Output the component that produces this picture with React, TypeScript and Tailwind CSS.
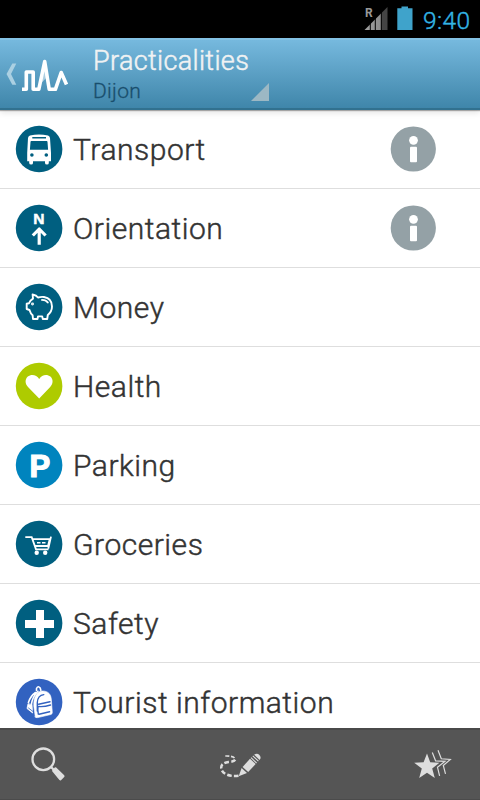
import type { ReactNode } from 'react'

type Item = {
  label: string
  color: string
  icon: ReactNode
  info?: boolean
}

const items: Item[] = [
  {
    label: 'Transport',
    color: '#005f80',
    info: true,
    icon: (
      <g fill="#fff">
        <path fillRule="evenodd" d="M15 10.5Q24 8.4 33 10.5Q34.8 11 35 13L36 28V36.2H33.8V38Q33.8 39.5 32 39.5Q30 39.5 30 38V36.2H18V38Q18 39.5 16.2 39.5Q14.2 39.5 14.2 38V36.2H12.2V28L13 13Q13.2 11 15 10.5ZM17.3 11.9V13.4H31V11.9ZM16.2 16Q15.6 16 15.5 17L14.9 24.7H33.1L32.5 17Q32.4 16 31.8 16Z" />
        <circle cx="16.9" cy="30" r="1.8" fill="#005f80" />
        <circle cx="31.3" cy="30" r="1.8" fill="#005f80" />
      </g>
    ),
  },
  {
    label: 'Orientation',
    color: '#005f80',
    info: true,
    icon: (
      <>
        <text x="23.9" y="20" textAnchor="middle" strokeWidth=".5" className="fill-white stroke-white font-['Liberation_Sans',sans-serif] text-[15.5px] font-bold">N</text>
        <path d="M24.2 40.8V25.5M17.8 31.5L24.2 25L30.6 31.5" fill="none" stroke="#fff" strokeWidth="3.2" strokeLinejoin="round" />
      </>
    ),
  },
  {
    label: 'Money',
    color: '#005f80',
    icon: (
      <g fill="none" stroke="#fff" strokeWidth="1.9" strokeLinejoin="round" strokeLinecap="round">
        <path d="M17.6 11.5Q21.5 12.2 23 14.5Q26 13.6 29 14C34 14.8 37 18.5 37 23.5C37 27.2 35.2 30 32.8 32L32.2 36H27.8L27.2 33.4H23L22.5 36H18L17.6 32.2Q15.5 30.5 14.5 27L11.7 26V20.8L14 20.3Q15 17.4 18 15.6Z" />
        <path d="M27 16.9Q31 17 32.8 19.5" />
        <circle cx="17.5" cy="21" r=".5" fill="#fff" />
      </g>
    ),
  },
  {
    label: 'Health',
    color: '#aecb00',
    icon: (
      <path d="M24.2 36.5L13 25C9.7 21.5 10 17 12.8 14.6C16.2 11.7 21.7 12.7 24.2 17C26.7 12.7 32 11.7 35.4 14.6C38.2 17 38.5 21.5 35.2 25Z" fill="#fff" />
    ),
  },
  {
    label: 'Parking',
    color: '#0084be',
    icon: (
      <text x="14.4" y="35.6" strokeWidth="1.2" className="fill-white stroke-white font-['Liberation_Sans',sans-serif] text-[31px] font-bold">P</text>
    ),
  },
  {
    label: 'Groceries',
    color: '#005f80',
    icon: (
      <>
        <path d="M10.3 17.2H16.7L21 29.3H33.5M17.5 19.1H34.8L33 26H20M36 16.6L33.3 28.5" fill="none" stroke="#fff" strokeWidth="1.8" />
        <path d="M22 22.7H25.5M27 22.7H30.5" stroke="#fff" strokeWidth="1.6" />
        <circle cx="21.7" cy="32.8" r="2.2" fill="#fff" />
        <circle cx="30.2" cy="32.8" r="2.2" fill="#fff" />
      </>
    ),
  },
  {
    label: 'Safety',
    color: '#005f80',
    icon: <path d="M21 11H29V21H39V29H29V39H21V29H10V21H21Z" fill="#fff" />,
  },
  {
    label: 'Tourist information',
    color: '#3262c0',
    icon: (
      <g fill="none" stroke="#fff" strokeLinejoin="round" strokeLinecap="round">
        <path d="M20.3 39L18.8 28C18.3 19 22 13 27.5 13C33.5 13 36 16.5 36.4 22L37.3 34.5Q37.4 36 35.9 36.5L22.8 39.6Q20.6 40 20.3 39Z" fill="#fff" strokeWidth=".6" />
        <path d="M22.3 33V24.5Q22.8 17.2 28.8 16.6M23.6 26.2L35 23.8M23.3 36Q22.5 32 23 28.5Q29 29.2 35.5 27M24 36.2L34.6 33.8" stroke="#3262c0" strokeWidth="1.4" />
        <path d="M21.5 12.5V10.5Q23 7.3 25.2 10L25.8 12.3M20.5 14.5Q15.5 18 13.4 24.5M23 13.3Q17.2 19 16.3 27" strokeWidth="1.6" />
        <path d="M13 26L12 30.5L17.6 35L17 27Z" fill="#fff" strokeWidth=".8" />
        <path d="M13.5 30L18 33.5" stroke="#3262c0" strokeWidth=".8" />
      </g>
    ),
  },
]

function InfoButton() {
  return (
    <button type="button" aria-label="Info" className="mr-[43px] ml-auto">
      <svg width="48" height="48" viewBox="0 0 48 48">
        <circle cx="24.3" cy="24" r="22.6" fill="#94a1a6" />
        <circle cx="24.5" cy="15.3" r="4.4" fill="#fff" />
        <rect x="21" y="21.8" width="7" height="15.4" rx="1" fill="#fff" />
      </svg>
    </button>
  )
}

function Row({ item }: { item: Item }) {
  return (
    <li className="flex h-[79px] shrink-0 items-center border-b border-[#dedede] pl-[15px]">
      <svg width="48" height="48" viewBox="0 0 48 48" className="shrink-0">
        <circle cx="24.1" cy="24" r="23.3" fill={item.color} />
        {item.icon}
      </svg>
      <span className="mt-0.5 ml-2.5 text-[30px] leading-[40px] font-light tracking-[0.52px] whitespace-nowrap text-[#333] [-webkit-text-stroke:0.45px_#333]">{item.label}</span>
      {item.info ? <InfoButton /> : null}
    </li>
  )
}

function StatusBar() {
  return (
    <div className="flex h-[38px] shrink-0 items-center justify-end bg-black">
      <svg width="60" height="38" viewBox="360 0 60 38">
        <defs>
          <linearGradient id="signal" x1="0" x2="1">
            <stop offset="0" stopColor="#a0a0a0" />
            <stop offset=".7" stopColor="#8c8c8c" />
            <stop offset=".72" stopColor="#444" />
            <stop offset="1" stopColor="#444" />
          </linearGradient>
        </defs>
        <path d="M364.5 30L387.5 7V30Z" fill="url(#signal)" />
        <path d="M370.3 10V30M375.3 10V30M381.3 10V30" stroke="#000" strokeWidth="1" />
        <path d="M365 17.5V8H373V17.5Z" fill="#000" />
        <text x="365" y="17" className="fill-[#999] font-[Roboto,sans-serif] text-[12px] font-bold">R</text>
        <path d="M397.3 8.3H401.5V6.5H408V8.3H412.5V30H397.3Z" fill="#3fa3cb" />
      </svg>
      <span className="mt-[3px] w-[60px] pl-[3px] text-[24.5px] leading-[38px] font-light tracking-[0.4px] text-[#33b5e5] [-webkit-text-stroke:0.4px_#33b5e5]">9:40</span>
    </div>
  )
}

function ActionBar() {
  return (
    <header className="relative z-10 flex h-[72px] shrink-0 border-t-2 border-b-2 border-t-[#83c2e4] border-b-[#31718f] bg-linear-to-b from-[#76b9de] to-[#3f86aa] shadow-[0_1px_1px_rgba(0,0,0,0.3),0_3px_6px_rgba(0,0,0,0.1)]">
      <svg width="93" height="68" viewBox="0 40 93 68" className="shrink-0">
        <path d="M12.3 63.5H16.3L11 74L16.3 84.7H12.3L6.5 74Z" fill="#abd0e2" />
        <path d="M22 89.3H26.3V72H33.2V89.3H38.8L44.7 61.5L49.2 89.3H55.4L61.2 72.5L66.5 84.5" fill="none" stroke="#fff" strokeWidth="3.6" strokeLinejoin="round" />
        <path d="M39.5 85L44.6 60L48 76Z" fill="#fff" opacity=".5" />
      </svg>
      <div className="flex flex-col">
        <h1 className="mt-[5px] text-[27px] leading-8 font-light tracking-[0.35px] text-[#f0f2f3] [-webkit-text-stroke:0.5px_#f0f2f3]">Practicalities</h1>
        <div className="flex">
          <span className="w-[158px] text-[21px] leading-[29px] font-light tracking-[0.3px] text-[#194e6c] [-webkit-text-stroke:0.3px_#194e6c]">Dijon</span>
          <svg width="19" height="19" viewBox="0 0 19 19" className="mt-1.5">
            <path d="M18 0V18H0Z" fill="#9cb8c4" />
          </svg>
        </div>
      </div>
    </header>
  )
}

function BottomBar() {
  return (
    <nav className="flex h-[72px] shrink-0 items-center justify-between border-t-2 border-b border-t-[#4a4a4a] border-b-[#4b4b4b] bg-[#555] px-6">
      <button type="button" aria-label="Search">
        <svg width="48" height="48" viewBox="24 741 48 48">
          <circle cx="43.3" cy="759.3" r="10.8" fill="none" stroke="#dedede" strokeWidth="2.3" />
          <path d="M50.5 766.5L54 770" stroke="#dedede" strokeWidth="2.3" />
          <path d="M52.2 770.2L55 767.3Q55.7 767 56.2 767.5L64.2 775.2Q65 776.2 64.2 777L61 780.2Q60.2 780.8 59.4 780L52.2 771.3Z" fill="#dedede" />
        </svg>
      </button>
      <button type="button" aria-label="Draw route">
        <svg width="48" height="48" viewBox="216 741 48 48">
          <path d="M225.3 756C231 755.8 235 757 235 759.4" fill="none" stroke="#dedede" strokeWidth="1.6" strokeDasharray="4 1.6" />
          <path d="M235.2 759.8Q234 761.6 228.5 762Q220.5 763 221.3 768.5C222 774 230 777 238.5 775.8" fill="none" stroke="#dedede" strokeWidth="2.5" strokeDasharray="4.6 2.2" />
          <path d="M238.7 776.2L241.6 768L247 773Z" fill="#dedede" />
          <path d="M242.6 767L250 758.7L255.7 764L248.2 772Z" fill="#dedede" />
          <path d="M251 757.7L256.6 763M252.8 755.9L258.4 761.2" stroke="#dedede" strokeWidth="1.1" />
          <path d="M254.2 754.8Q257 752.5 259.4 755Q261.7 757.6 259.6 760.1Z" fill="#dedede" />
        </svg>
      </button>
      <button type="button" aria-label="Favourites">
        <svg width="48" height="48" viewBox="408 741 48 48">
          <path d="M427 753.6L430.2 762.2L439.4 762.7L432.2 768.4L434.8 778L427 772.8L419.2 778L421.8 768.4L414.2 762.7L423.6 762.2Z" fill="#dedede" />
          <path d="M432.3 752.5L435.6 760.8L445 761.3L437.5 767.3L439.6 775.8M438 750.3L441.3 758.8L450.3 759.4L443.3 765.5L445.5 773.8" fill="none" stroke="#dedede" strokeWidth="1.2" />
        </svg>
      </button>
    </nav>
  )
}

export default function App() {
  return (
    <div className="flex h-[800px] w-[480px] flex-col overflow-hidden bg-white font-[Roboto,sans-serif]">
      <StatusBar />
      <ActionBar />
      <ul className="-mb-px flex min-h-0 flex-1 flex-col overflow-hidden pb-px">
        {items.map((item) => (
          <Row key={item.label} item={item} />
        ))}
      </ul>
      <BottomBar />
    </div>
  )
}
